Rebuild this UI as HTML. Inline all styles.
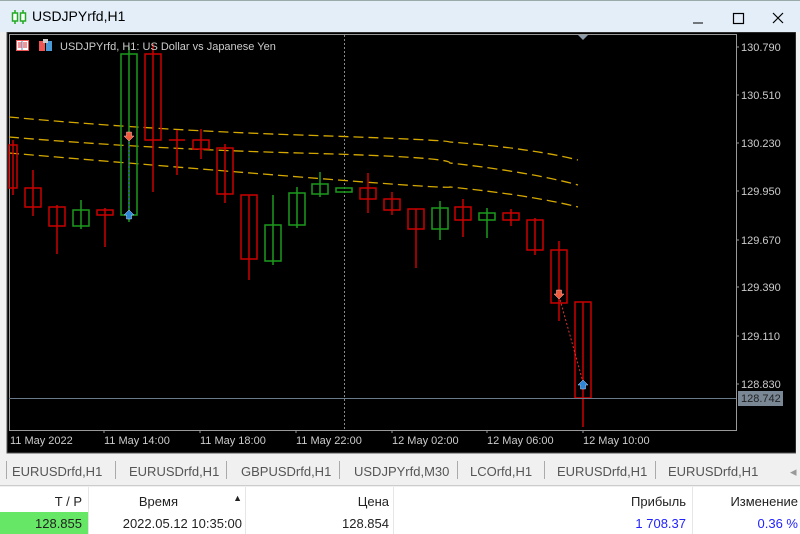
<!DOCTYPE html>
<html><head><meta charset="utf-8"><style>
*{margin:0;padding:0;box-sizing:border-box}
body{width:800px;height:534px;overflow:hidden;background:#f0f0f0;font-family:"Liberation Sans",sans-serif;position:relative}
.title{position:absolute;left:0;top:0;width:800px;height:32px;background:#e4eef9;border-top:1px solid #9aa}
.title span{position:absolute;left:32px;top:7px;font-size:14px;color:#000}
.tabs{position:absolute;left:0;top:455px;width:800px;height:31px;background:#f0f0f0;border-bottom:1px solid #ccc}
.tab{position:absolute;top:9px;font-size:13px;color:#555}
.sep{position:absolute;top:6px;width:1px;height:18px;background:#aaa}
.tbl{position:absolute;left:0;top:487px;width:800px;height:47px;background:#fff;font-size:13px;color:#222}
.c{position:absolute;text-align:right}
.v{position:absolute;top:0;width:1px;height:47px;background:#e6e6e6}
</style></head><body>
<div class="title">
<svg style="position:absolute;left:11px;top:9px" width="16" height="14"><line x1="4" y1="0" x2="4" y2="14" stroke="#2a2" stroke-width="1.5"/><rect x="1.5" y="3" width="5" height="8" fill="#fff" stroke="#2a2" stroke-width="1.5"/><line x1="12" y1="0" x2="12" y2="14" stroke="#2a2" stroke-width="1.5"/><rect x="9.5" y="3" width="5" height="8" fill="#fff" stroke="#2a2" stroke-width="1.5"/></svg>
<span>USDJPYrfd,H1</span>
<svg style="position:absolute;left:690px;top:10px" width="100" height="14"><line x1="3" y1="12" x2="13" y2="12" stroke="#000"/><rect x="43.5" y="2.5" width="10" height="10" fill="none" stroke="#000" stroke-width="1.2"/><path d="M83 2 L93 12 M93 2 L83 12" stroke="#000" stroke-width="1.2"/></svg>
</div>
<svg style="position:absolute;left:0;top:32px" width="800" height="423" font-family="Liberation Sans,sans-serif" font-size="11">
<rect x="7" y="0" width="789" height="421" fill="#000" stroke="#555"/>
<rect x="796" y="0" width="4" height="423" fill="#f0f0f0"/>
<g transform="translate(0,-32)">
<rect x="9.5" y="34.5" width="727" height="396" fill="none" stroke="#999"/>
<line x1="344.5" y1="35" x2="344.5" y2="430" stroke="#888" stroke-dasharray="2,2"/>
<path d="M578 35 L588 35 L583 40Z" fill="#8a9aa8"/>
<g fill="none" stroke="#d4a800" stroke-width="1.3" stroke-dasharray="10,5">
<path d="M9 117 Q150 130 300 135 T450 142 Q530 148 578 160"/>
<path d="M9 137 Q150 149 300 153 T450 163 Q530 172 578 185"/>
<path d="M9 153 Q150 165 300 177 T450 187 Q530 195 578 207"/>
</g>
<g stroke-width="1.5" fill="none">
<g stroke="#c00"><line x1="13" y1="140" x2="13" y2="195"/><rect x="9" y="145" width="8" height="43"/></g>
<g stroke="#c00"><line x1="33" y1="170" x2="33" y2="216"/><rect x="25" y="188" width="16" height="19"/></g>
<g stroke="#c00"><line x1="57" y1="205" x2="57" y2="254"/><rect x="49" y="207" width="16" height="19"/></g>
<g stroke="#1c9a1c"><line x1="81" y1="200" x2="81" y2="229"/><rect x="73" y="210" width="16" height="16"/></g>
<g stroke="#c00"><line x1="105" y1="208" x2="105" y2="247"/><rect x="97" y="210" width="16" height="5"/></g>
<g stroke="#1c9a1c"><line x1="129" y1="47" x2="129" y2="222"/><rect x="121" y="54" width="16" height="161"/></g>
<g stroke="#c00"><line x1="153" y1="44" x2="153" y2="192"/><rect x="145" y="54" width="16" height="86"/></g>
<g stroke="#c00"><line x1="177" y1="130" x2="177" y2="175"/><line x1="169" y1="140" x2="185" y2="140"/></g>
<g stroke="#c00"><line x1="201" y1="129" x2="201" y2="159"/><rect x="193" y="140" width="16" height="9"/></g>
<g stroke="#c00"><line x1="225" y1="144" x2="225" y2="203"/><rect x="217" y="148" width="16" height="46"/></g>
<g stroke="#c00"><line x1="249" y1="195" x2="249" y2="280"/><rect x="241" y="195" width="16" height="64"/></g>
<g stroke="#1c9a1c"><line x1="273" y1="195" x2="273" y2="265"/><rect x="265" y="225" width="16" height="36"/></g>
<g stroke="#1c9a1c"><line x1="297" y1="187" x2="297" y2="228"/><rect x="289" y="193" width="16" height="32"/></g>
<g stroke="#1c9a1c"><line x1="320" y1="172" x2="320" y2="197"/><rect x="312" y="184" width="16" height="10"/></g>
<g stroke="#1c9a1c"><rect x="336" y="188" width="16" height="4"/></g>
<g stroke="#c00"><line x1="368" y1="173" x2="368" y2="213"/><rect x="360" y="188" width="16" height="11"/></g>
<g stroke="#c00"><line x1="392" y1="192" x2="392" y2="215"/><rect x="384" y="199" width="16" height="11"/></g>
<g stroke="#c00"><line x1="416" y1="209" x2="416" y2="268"/><rect x="408" y="209" width="16" height="20"/></g>
<g stroke="#1c9a1c"><line x1="440" y1="201" x2="440" y2="240"/><rect x="432" y="208" width="16" height="21"/></g>
<g stroke="#c00"><line x1="463" y1="199" x2="463" y2="237"/><rect x="455" y="207" width="16" height="13"/></g>
<g stroke="#1c9a1c"><line x1="487" y1="208" x2="487" y2="238"/><rect x="479" y="213" width="16" height="7"/></g>
<g stroke="#c00"><line x1="511" y1="209" x2="511" y2="226"/><rect x="503" y="213" width="16" height="7"/></g>
<g stroke="#c00"><line x1="535" y1="218" x2="535" y2="255"/><rect x="527" y="220" width="16" height="30"/></g>
<g stroke="#c00"><line x1="559" y1="241" x2="559" y2="321"/><rect x="551" y="250" width="16" height="53"/></g>
<g stroke="#c00"><line x1="583" y1="302" x2="583" y2="427"/><rect x="575" y="302" width="16" height="96"/></g>
</g>
<line x1="129" y1="138" x2="129" y2="212" stroke="#3a7ac8" stroke-dasharray="2,2"/>
<line x1="559" y1="296" x2="583" y2="382" stroke="#d33" stroke-dasharray="2,2"/>
<path d="M126.5 132 L131.5 132 L131.5 136 L134 136 L129 141 L124 136 L126.5 136Z" fill="#f05a3a" stroke="#fbb" stroke-width="0.5"/>
<path d="M126.5 219 L131.5 219 L131.5 215 L134 215 L129 210 L124 215 L126.5 215Z" fill="#2d86d8" stroke="#bdf" stroke-width="0.5"/>
<path d="M556.5 290 L561.5 290 L561.5 294 L564 294 L559 299 L554 294 L556.5 294Z" fill="#f05a3a" stroke="#fbb" stroke-width="0.5"/>
<path d="M580.5 389 L585.5 389 L585.5 385 L588 385 L583 380 L578 385 L580.5 385Z" fill="#2d86d8" stroke="#bdf" stroke-width="0.5"/>
<line x1="9" y1="398.5" x2="736" y2="398.5" stroke="#6a7a8a"/>
<rect x="738" y="391" width="45" height="15" fill="#7a8896"/>
<text x="741" y="402" fill="#222">128.742</text>
<g fill="#ccc">
<text x="741" y="51">130.790</text><text x="741" y="99">130.510</text><text x="741" y="147">130.230</text><text x="741" y="195">129.950</text><text x="741" y="244">129.670</text><text x="741" y="291">129.390</text><text x="741" y="340">129.110</text><text x="741" y="388">128.830</text>
<text x="10" y="444">11 May 2022</text><text x="104" y="444">11 May 14:00</text><text x="200" y="444">11 May 18:00</text><text x="296" y="444">11 May 22:00</text><text x="392" y="444">12 May 02:00</text><text x="487" y="444">12 May 06:00</text><text x="583" y="444">12 May 10:00</text>
<text x="60" y="50">USDJPYrfd, H1:  US Dollar vs Japanese Yen</text>
</g>
<g stroke="#999"><path d="M736 47h3M736 95h3M736 143h3M736 191h3M736 240h3M736 287h3M736 336h3M736 384h3M104 430v3M200 430v3M296 430v3M392 430v3M487 430v3M583 430v3"/></g>
<rect x="16" y="40" width="13" height="11" fill="#e55" /><rect x="17" y="41" width="11" height="9" fill="#fff"/><path d="M18 43h4M18 45h4M18 47h4M23 43h4M23 45h4M23 47h4" stroke="#e55" stroke-width="1.2"/><path d="M22 41v9" stroke="#58c"/>
<rect x="39" y="41" width="6" height="10" fill="#e55"/><rect x="46" y="41" width="6" height="10" fill="#4a9ad8"/><rect x="43" y="39" width="5" height="4" fill="#ccc"/>
</g>
</svg>
<div class="tabs">
<div class="sep" style="left:6px"></div>
<span class="tab" style="left:12px">EURUSDrfd,H1</span><div class="sep" style="left:115px"></div>
<span class="tab" style="left:129px">EURUSDrfd,H1</span><div class="sep" style="left:226px"></div>
<span class="tab" style="left:241px">GBPUSDrfd,H1</span><div class="sep" style="left:339px"></div>
<span class="tab" style="left:354px">USDJPYrfd,M30</span><div class="sep" style="left:457px"></div>
<span class="tab" style="left:470px">LCOrfd,H1</span><div class="sep" style="left:544px"></div>
<span class="tab" style="left:557px">EURUSDrfd,H1</span><div class="sep" style="left:655px"></div>
<span class="tab" style="left:668px">EURUSDrfd,H1</span>
<span class="tab" style="left:790px;color:#999">◂</span>
</div>
<div class="tbl">
<div style="position:absolute;left:0;top:25px;width:88px;height:22px;background:#66e766"></div>
<div class="v" style="left:88px"></div><div class="v" style="left:245px"></div><div class="v" style="left:393px"></div><div class="v" style="left:692px"></div>
<span class="c" style="right:718px;top:7px">T / P</span>
<span class="c" style="right:622px;top:7px">Время</span><span class="c" style="right:558px;top:6px;font-size:9px">▲</span>
<span class="c" style="right:411px;top:7px">Цена</span>
<span class="c" style="right:114px;top:7px">Прибыль</span>
<span class="c" style="right:2px;top:7px">Изменение</span>
<span class="c" style="right:718px;top:29px">128.855</span>
<span class="c" style="right:558px;top:29px">2022.05.12 10:35:00</span>
<span class="c" style="right:411px;top:29px">128.854</span>
<span class="c" style="right:114px;top:29px;color:#22f">1 708.37</span>
<span class="c" style="right:2px;top:29px;color:#22f">0.36 %</span>
</div>
</body></html>
